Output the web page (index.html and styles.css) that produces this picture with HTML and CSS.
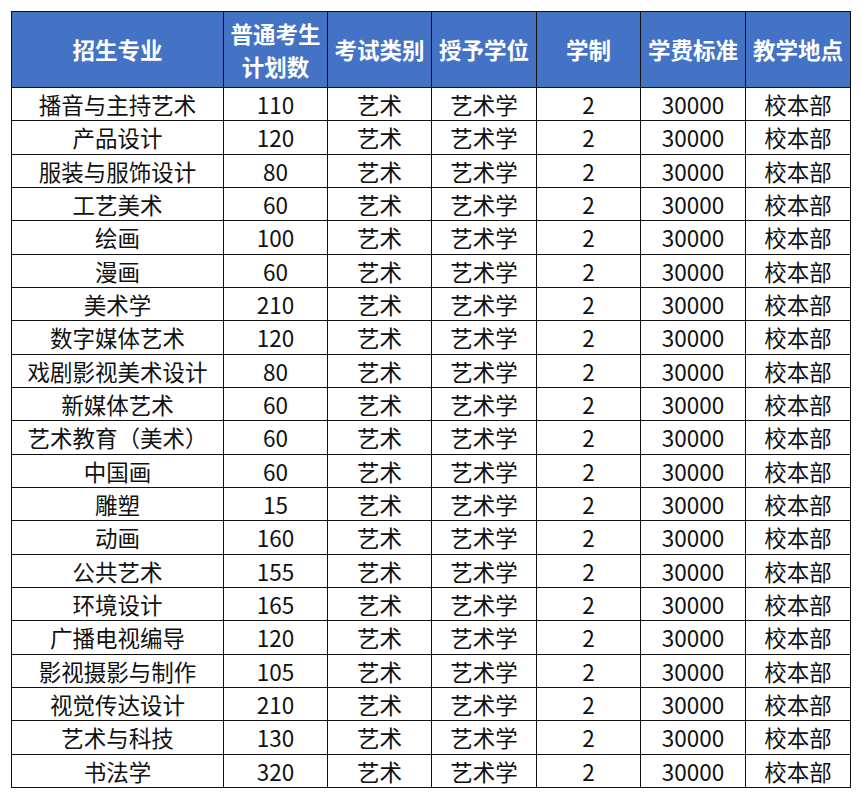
FILE: index.html
```html
<!DOCTYPE html>
<html lang="zh">
<head>
<meta charset="utf-8">
<link rel="stylesheet" href="styles.css">
</head>
<body>
<table class="plan">
<colgroup>
<col class="c1"><col class="c2"><col class="c3"><col class="c4"><col class="c5"><col class="c6"><col class="c7">
</colgroup>
<thead>
<tr class="head">
<th>招生专业</th><th>普通考生<br>计划数</th><th>考试类别</th><th>授予学位</th><th>学制</th><th>学费标准</th><th>教学地点</th>
</tr>
</thead>
<tbody>
<tr><td>播音与主持艺术</td><td>110</td><td>艺术</td><td>艺术学</td><td>2</td><td>30000</td><td>校本部</td></tr>
<tr><td>产品设计</td><td>120</td><td>艺术</td><td>艺术学</td><td>2</td><td>30000</td><td>校本部</td></tr>
<tr><td>服装与服饰设计</td><td>80</td><td>艺术</td><td>艺术学</td><td>2</td><td>30000</td><td>校本部</td></tr>
<tr><td>工艺美术</td><td>60</td><td>艺术</td><td>艺术学</td><td>2</td><td>30000</td><td>校本部</td></tr>
<tr><td>绘画</td><td>100</td><td>艺术</td><td>艺术学</td><td>2</td><td>30000</td><td>校本部</td></tr>
<tr><td>漫画</td><td>60</td><td>艺术</td><td>艺术学</td><td>2</td><td>30000</td><td>校本部</td></tr>
<tr><td>美术学</td><td>210</td><td>艺术</td><td>艺术学</td><td>2</td><td>30000</td><td>校本部</td></tr>
<tr><td>数字媒体艺术</td><td>120</td><td>艺术</td><td>艺术学</td><td>2</td><td>30000</td><td>校本部</td></tr>
<tr><td>戏剧影视美术设计</td><td>80</td><td>艺术</td><td>艺术学</td><td>2</td><td>30000</td><td>校本部</td></tr>
<tr><td>新媒体艺术</td><td>60</td><td>艺术</td><td>艺术学</td><td>2</td><td>30000</td><td>校本部</td></tr>
<tr><td>艺术教育（美术）</td><td>60</td><td>艺术</td><td>艺术学</td><td>2</td><td>30000</td><td>校本部</td></tr>
<tr><td>中国画</td><td>60</td><td>艺术</td><td>艺术学</td><td>2</td><td>30000</td><td>校本部</td></tr>
<tr><td>雕塑</td><td>15</td><td>艺术</td><td>艺术学</td><td>2</td><td>30000</td><td>校本部</td></tr>
<tr><td>动画</td><td>160</td><td>艺术</td><td>艺术学</td><td>2</td><td>30000</td><td>校本部</td></tr>
<tr><td>公共艺术</td><td>155</td><td>艺术</td><td>艺术学</td><td>2</td><td>30000</td><td>校本部</td></tr>
<tr><td>环境设计</td><td>165</td><td>艺术</td><td>艺术学</td><td>2</td><td>30000</td><td>校本部</td></tr>
<tr><td>广播电视编导</td><td>120</td><td>艺术</td><td>艺术学</td><td>2</td><td>30000</td><td>校本部</td></tr>
<tr><td>影视摄影与制作</td><td>105</td><td>艺术</td><td>艺术学</td><td>2</td><td>30000</td><td>校本部</td></tr>
<tr><td>视觉传达设计</td><td>210</td><td>艺术</td><td>艺术学</td><td>2</td><td>30000</td><td>校本部</td></tr>
<tr><td>艺术与科技</td><td>130</td><td>艺术</td><td>艺术学</td><td>2</td><td>30000</td><td>校本部</td></tr>
<tr><td>书法学</td><td>320</td><td>艺术</td><td>艺术学</td><td>2</td><td>30000</td><td>校本部</td></tr>
</tbody>
</table>
</body>
</html>
```
FILE: styles.css
```css
html, body {
  margin: 0;
  padding: 0;
  background: #ffffff;
}
body {
  padding: 11px 0 0 11px;
  font-family: "Noto Sans CJK SC", "Noto Sans", sans-serif;
  color: #111111;
}
.plan {
  border-collapse: collapse;
  table-layout: fixed;
  width: 839px;
  border: 1.5px solid #111;
}
.c1 { width: 212px; }
.c2 { width: 104px; }
.c3 { width: 104px; }
.c4 { width: 105px; }
.c5 { width: 104px; }
.c6 { width: 105px; }
.c7 { width: 105px; }
.plan th, .plan td {
  border: 1px solid #111;
  padding: 0;
  text-align: center;
  vertical-align: middle;
  white-space: nowrap;
  font-size: 22.5px;
}
.head th {
  background: #4472c4;
  color: #ffffff;
  font-weight: 700;
  height: 75px;
  line-height: 33px;
}
.plan td {
  height: 32.33px;
  line-height: 30px;
  font-weight: 400;
}
```
